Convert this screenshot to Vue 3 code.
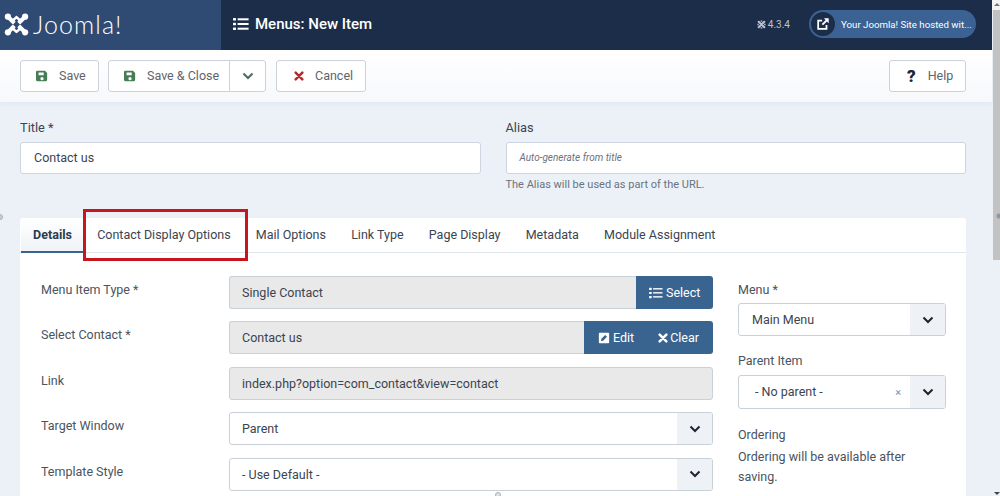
<script setup>
const tabs = ['Details','Contact Display Options','Mail Options','Link Type','Page Display','Metadata','Module Assignment']
</script>

<template>
  <div class="page">
    <div class="column">
      <header class="top">
        <div class="brand">
          <svg viewBox="0 0 32 32" width="25" height="25"><g fill="none" stroke="#fff" stroke-linecap="round"><path stroke-width="5.200" d="M7 8l5.500 5.500M25 8l-5.500 5.500M7 24l5.500-5.500M25 24l-5.500-5.500"/><path stroke-width="3.200" d="M10.500 11.500l5.500-5M21.500 11.500l-5.500-5M10.500 20.500l5.500 5M21.500 20.500l-5.500 5"/></g><g fill="#fff"><circle cx="5" cy="6" r="4"/><circle cx="27" cy="6" r="4"/><circle cx="5" cy="26" r="4"/><circle cx="27" cy="26" r="4"/></g><path d="M16 11.500l4.500 4.500-4.500 4.500-4.500-4.500z" fill="#2f4b74"/></svg>
          <span class="jword">Joomla!</span>
        </div>
        <div class="title">
          <svg viewBox="0 0 16 14" width="16" height="14"><g fill="#fff"><rect x="0" y="1" width="3" height="2.600" rx=".6"/><rect x="0" y="5.700" width="3" height="2.600" rx=".6"/><rect x="0" y="10.400" width="3" height="2.600" rx=".6"/><rect x="4.600" y="1.300" width="11" height="2"/><rect x="4.600" y="6" width="11" height="2"/><rect x="4.600" y="10.700" width="11" height="2"/></g></svg>
          <span>Menus: New Item</span>
        </div>
        <div class="ver">
          <svg viewBox="0 0 32 32" width="9" height="9"><g fill="none" stroke="#b9c2cf" stroke-width="7" stroke-linecap="round"><path d="M6 6l20 20M26 6L6 26"/></g><path d="M4 13v6M28 13v6M13 4h6M13 28h6" stroke="#b9c2cf" stroke-width="5"/></svg>
          <span>4.3.4</span>
        </div>
        <div class="pill">
          <span class="pillicon"><svg viewBox="0 0 16 16" width="14" height="14"><path d="M12 9v4.500H2.500V4H7" fill="none" stroke="#fff" stroke-width="2"/><path d="M9 1.500h5.500V7l-2-2-4.500 4.500-1.500-1.500L11 3.500z" fill="#fff"/></svg></span>
          <span class="pilltext">Your Joomla! Site hosted wit...</span>
        </div>
      </header>

      <div class="toolbar">
        <button class="btn save"><svg viewBox="0 0 14 14" width="12" height="12"><path d="M1.500 1h9L13 3.500v8a1.500 1.500 0 0 1-1.500 1.500h-10A1.500 1.500 0 0 1 0 11.500v-9A1.500 1.500 0 0 1 1.500 1zM3 3v3h6V3zm4 5.200a1.900 1.900 0 1 0 0 3.800 1.900 1.900 0 0 0 0-3.800z" fill="#457d54" fill-rule="evenodd"/></svg>Save</button>
        <div class="group">
          <button class="btn inner"><svg viewBox="0 0 14 14" width="12" height="12"><path d="M1.500 1h9L13 3.500v8a1.500 1.500 0 0 1-1.500 1.500h-10A1.500 1.500 0 0 1 0 11.500v-9A1.500 1.500 0 0 1 1.500 1zM3 3v3h6V3zm4 5.200a1.900 1.900 0 1 0 0 3.800 1.900 1.900 0 0 0 0-3.800z" fill="#457d54" fill-rule="evenodd"/></svg>Save &amp; Close</button>
          <span class="caret"><svg viewBox="0 0 12 8" width="12" height="8"><path d="M1.500 1.500L6 6l4.500-4.500" fill="none" stroke="#4d6a5c" stroke-width="2"/></svg></span>
        </div>
        <button class="btn cancel"><svg viewBox="0 0 12 12" width="10" height="10"><path d="M2 2l8 8M10 2l-8 8" stroke="#b52a2a" stroke-width="3" stroke-linecap="round"/></svg>Cancel</button>
        <button class="btn help"><b class="q">?</b>Help</button>
      </div>

      <main class="main">
        <div class="heads">
          <div class="hcol">
            <label class="lab">Title *</label>
            <div class="inp">Contact us</div>
          </div>
          <div class="hcol">
            <label class="lab">Alias</label>
            <div class="inp ph">Auto-generate from title</div>
            <p class="hint">The Alias will be used as part of the URL.</p>
          </div>
        </div>

        <section class="card">
          <nav class="tabs">
            <span v-for="(t,i) in tabs" :key="t" class="tab" :class="{active:i===0}">{{ t }}</span>
            <span class="mark"></span>
          </nav>
          <div class="body">
            <div class="left">
              <div class="row"><span class="rl">Menu Item Type *</span>
                <div class="ctl"><div class="fld ro grow join">Single Contact</div><span class="blue sel1"><svg viewBox="0 0 16 14" width="14" height="12"><g fill="#fff"><rect y="1" width="3" height="2.600" rx=".6"/><rect y="5.700" width="3" height="2.600" rx=".6"/><rect y="10.400" width="3" height="2.600" rx=".6"/><rect x="4.600" y="1.300" width="11" height="1.600"/><rect x="4.600" y="6" width="11" height="1.600"/><rect x="4.600" y="10.700" width="11" height="1.600"/></g></svg>Select</span></div></div>
              <div class="row"><span class="rl">Select Contact *</span>
                <div class="ctl"><div class="fld ro grow join">Contact us</div><span class="blue two"><span class="bi"><svg viewBox="0 0 14 14" width="12" height="12"><path d="M2 1h10a1 1 0 0 1 1 1v10a1 1 0 0 1-1 1H2a1 1 0 0 1-1-1V2a1 1 0 0 1 1-1zm1.500 9.500l2.500-.4 4.500-4.500-2.100-2.100L3.900 8z" fill="#fff" fill-rule="evenodd"/></svg>Edit</span><span class="bi clear"><svg viewBox="0 0 12 12" width="10" height="10"><path d="M2 2l8 8M10 2l-8 8" stroke="#fff" stroke-width="3" stroke-linecap="round"/></svg>Clear</span></span></div></div>
              <div class="row"><span class="rl">Link</span>
                <div class="ctl"><div class="fld ro grow">index.php?option=com_contact&amp;view=contact</div></div></div>
              <div class="row"><span class="rl">Target Window</span>
                <div class="ctl"><div class="fld grow sel"><span class="seltext">Parent</span><span class="chev"><svg viewBox="0 0 12 8" width="12" height="8"><path d="M1.500 1.500L6 6l4.500-4.500" fill="none" stroke="#1c2530" stroke-width="2"/></svg></span></div></div></div>
              <div class="row"><span class="rl">Template Style</span>
                <div class="ctl"><div class="fld grow sel"><span class="seltext">- Use Default -</span><span class="chev"><svg viewBox="0 0 12 8" width="12" height="8"><path d="M1.500 1.500L6 6l4.500-4.500" fill="none" stroke="#1c2530" stroke-width="2"/></svg></span></div></div></div>
            </div>
            <aside class="right">
              <div class="rlab">Menu *</div>
              <div class="fld sel side"><span class="seltext">Main Menu</span><span class="chev"><svg viewBox="0 0 12 8" width="12" height="8"><path d="M1.500 1.500L6 6l4.500-4.500" fill="none" stroke="#1c2530" stroke-width="2"/></svg></span></div>
              <div class="rlab second">Parent Item</div>
              <div class="fld sel side tall"><span class="seltext np">- No parent -</span><span class="x">×</span><span class="chev"><svg viewBox="0 0 12 8" width="12" height="8"><path d="M1.500 1.500L6 6l4.500-4.500" fill="none" stroke="#1c2530" stroke-width="2"/></svg></span></div>
              <div class="rlab third">Ordering</div>
              <p class="order">Ordering will be available after saving.</p>
            </aside>
          </div>
        </section>
      </main>
    </div>
    <div class="scroll">
      <span class="up"></span>
      <span class="thumb"></span>
      <span class="down"></span>
    </div>
    <span class="dot dl"></span>
    <span class="dot dr"></span>
    <span class="dot db"></span>
  </div>
</template>

<style>
html, body { margin: 0; height: 496px; overflow: hidden; background: #ecf1f8; }
</style>

<style scoped>
.page { position: relative; width: 1000px; height: 496px; overflow: hidden; display: flex; background: #ecf1f8; font-family: Roboto, "Liberation Sans", sans-serif; font-size: 12.500px; color: #3b4450; }
.column { width: 992px; flex: none; }
.scroll { width: 8px; height: 496px; flex: none; display: flex; flex-direction: column; box-sizing: border-box; padding-left: 1px; background: linear-gradient(#f4f4f4 0, #f4f4f4 10px, transparent 10px); }
.up { width: 0; height: 0; margin: 3px 0 0 1px; border-left: 3px solid transparent; border-right: 3px solid transparent; border-bottom: 3px solid #777; flex: none; }
.thumb { display: block; width: 7px; height: 250px; margin-top: 4px; background: #c2c2c2; flex: none; }
.down { width: 0; height: 0; margin: auto 0 1px 1px; border-left: 3px solid transparent; border-right: 3px solid transparent; border-top: 3px solid #444; flex: none; }
.dot { position: absolute; width: 6px; height: 6px; border-radius: 50%; background: #fff; border: 1px solid #aab0b6; box-sizing: border-box; }
.dl { left: -3px; top: 214px; background: #c9ced4; }
.dr { left: 996px; top: 213px; background: #8f9296; }
.db { left: 495px; top: 492px; background: #dde1e6; }
.top { height: 50px; background: #1c2d4a; display: flex; align-items: center; color: #fff; padding-bottom: 2px; box-sizing: border-box; }
.brand { width: 221px; height: 50px; background: #2f4b74; display: flex; align-items: center; padding: 0 0 2px 4px; box-sizing: border-box; gap: 4px; flex: none; align-self: flex-start; }
.jword { font-family: Lato, "Open Sans", sans-serif; font-weight: 300; font-size: 25px; letter-spacing: 1.100px; color: #fff; }
.title { display: flex; align-items: center; gap: 6px; margin-left: 12px; font-size: 15px; flex: 1; font-weight: 500; }
.ver { display: flex; align-items: center; gap: 2px; font-size: 10px; color: #b9c2cf; margin-right: 19px; }
.pill { width: 167px; height: 28px; margin-right: 16px; border-radius: 14px; background: #3b6292; display: flex; align-items: center; gap: 6px; box-sizing: border-box; padding-left: 1px; flex: none; }
.pilltext { font-size: 9.700px; white-space: nowrap; }
.pillicon { width: 24px; height: 24px; border-radius: 50%; background: #1c2d4a; display: flex; align-items: center; justify-content: center; margin-left: 1px; flex: none; }
.toolbar { height: 52px; box-sizing: border-box; background: linear-gradient(#fff, #f6f8fb); display: flex; align-items: center; padding: 0 26px 0 20px; box-shadow: 0 2px 4px rgba(30,50,80,.05); }
.btn { height: 32px; border: 1px solid #ccd2d8; border-radius: 3px; background: #fff; font: 12.500px Roboto, sans-serif; color: #5d646d; display: flex; align-items: center; padding: 0 0 1px 15px; gap: 11px; box-sizing: border-box; white-space: nowrap; }
.save { width: 79px; }
.group { display: flex; height: 32px; margin-left: 9px; border: 1px solid #ccd2d8; border-radius: 3px; background: #fff; box-sizing: border-box; width: 158px; }
.inner { border: 0; height: 30px; background: transparent; width: 120px; }
.caret { flex: 1; border-left: 1px solid #ccd2d8; display: flex; align-items: center; justify-content: center; }
.cancel { width: 90px; margin-left: 10px; padding-left: 17px; }
.help { margin-left: auto; width: 77px; padding-left: 17px; gap: 12px; }
.q { color: #1c2530; font-size: 17px; font-weight: 900; }
.main { padding: 0 26px 0 20px; }
.heads { display: flex; gap: 25px; padding-top: 16px; height: 116px; box-sizing: border-box; }
.hcol { flex: 1; }
.lab { display: block; font-size: 12.800px; line-height: 20px; margin-bottom: 4px; }
.inp { height: 32px; border: 1px solid #cdd6e0; border-radius: 3px; background: #fff; padding-left: 13px; line-height: 30px; box-sizing: border-box; color: #3b4450; }
.ph { font-style: italic; font-size: 10px; color: #6a727c; }
.hint { margin: 3px 0 0; font-size: 11px; line-height: 16px; color: #6a737e; }
.card { background: #fff; height: 300px; border-radius: 3px 3px 0 0; }
.tabs { height: 34px; display: flex; position: relative; border-bottom: 1px solid #dfe4e9; align-items: center; padding-left: .5px; }
.tab { padding: 0 12.600px; line-height: 33px; height: 34px; color: #3b4450; white-space: nowrap; box-sizing: border-box; }
.active { font-weight: 700; color: #2c3b4e; background: linear-gradient(#fff, #eff3f7); border-bottom: 2px solid #3a6490; height: 35px; margin-top: 1px; }
.mark { position: absolute; left: 63px; top: -9px; width: 159px; height: 46px; border: 3px solid #c8161e; pointer-events: none; }
.body { display: flex; padding: 23px 20px 0 21px; gap: 25px; }
.left { width: 672px; display: flex; flex-direction: column; gap: 12.400px; }
.row { display: flex; height: 33px; flex: none; }
.rl { width: 188px; line-height: 27px; flex: none; color: #4a535e; }
.ctl { flex: 1; display: flex; }
.fld { height: 33px; border: 1px solid #c8d0d8; border-radius: 3px; background: #fff; box-sizing: border-box; padding-left: 12px; line-height: 31px; color: #3b4450; }
.grow { flex: 1; }
.ro { background: #e9e9e9; }
.join { border-radius: 3px 0 0 3px; border-right: 0; }
.blue { background: #3a6490; color: #fff; border-radius: 0 3px 3px 0; display: flex; align-items: center; box-sizing: border-box; }
.sel1 { width: 77px; padding-left: 13px; gap: 3px; }
.two { width: 129px; padding-left: 14px; gap: 24px; }
.bi { display: flex; align-items: center; gap: 3px; }
.clear { gap: 2px; }
.sel { display: flex; padding: 0; }
.seltext { flex: 1; padding-left: 12px; }
.side .seltext { padding-left: 13px; }
.chev { width: 35px; background: #eef2f7; border-radius: 0 2px 2px 0; display: flex; align-items: center; justify-content: center; }
.right { width: 208px; }
.rlab { line-height: 20px; margin-top: 4px; margin-bottom: 3px; color: #4a535e; }
.second { margin-top: 15px; margin-bottom: 4px; }
.third { margin-top: 16px; margin-bottom: 2px; }
.side { width: 208px; }
.tall { height: 34px; }
.side .np { padding-left: 16px; }
.x { font-size: 11px; color: #8a9099; margin-right: 9px; line-height: 34px; }
.order { margin: 0; line-height: 20px; color: #4a535e; }
</style>
